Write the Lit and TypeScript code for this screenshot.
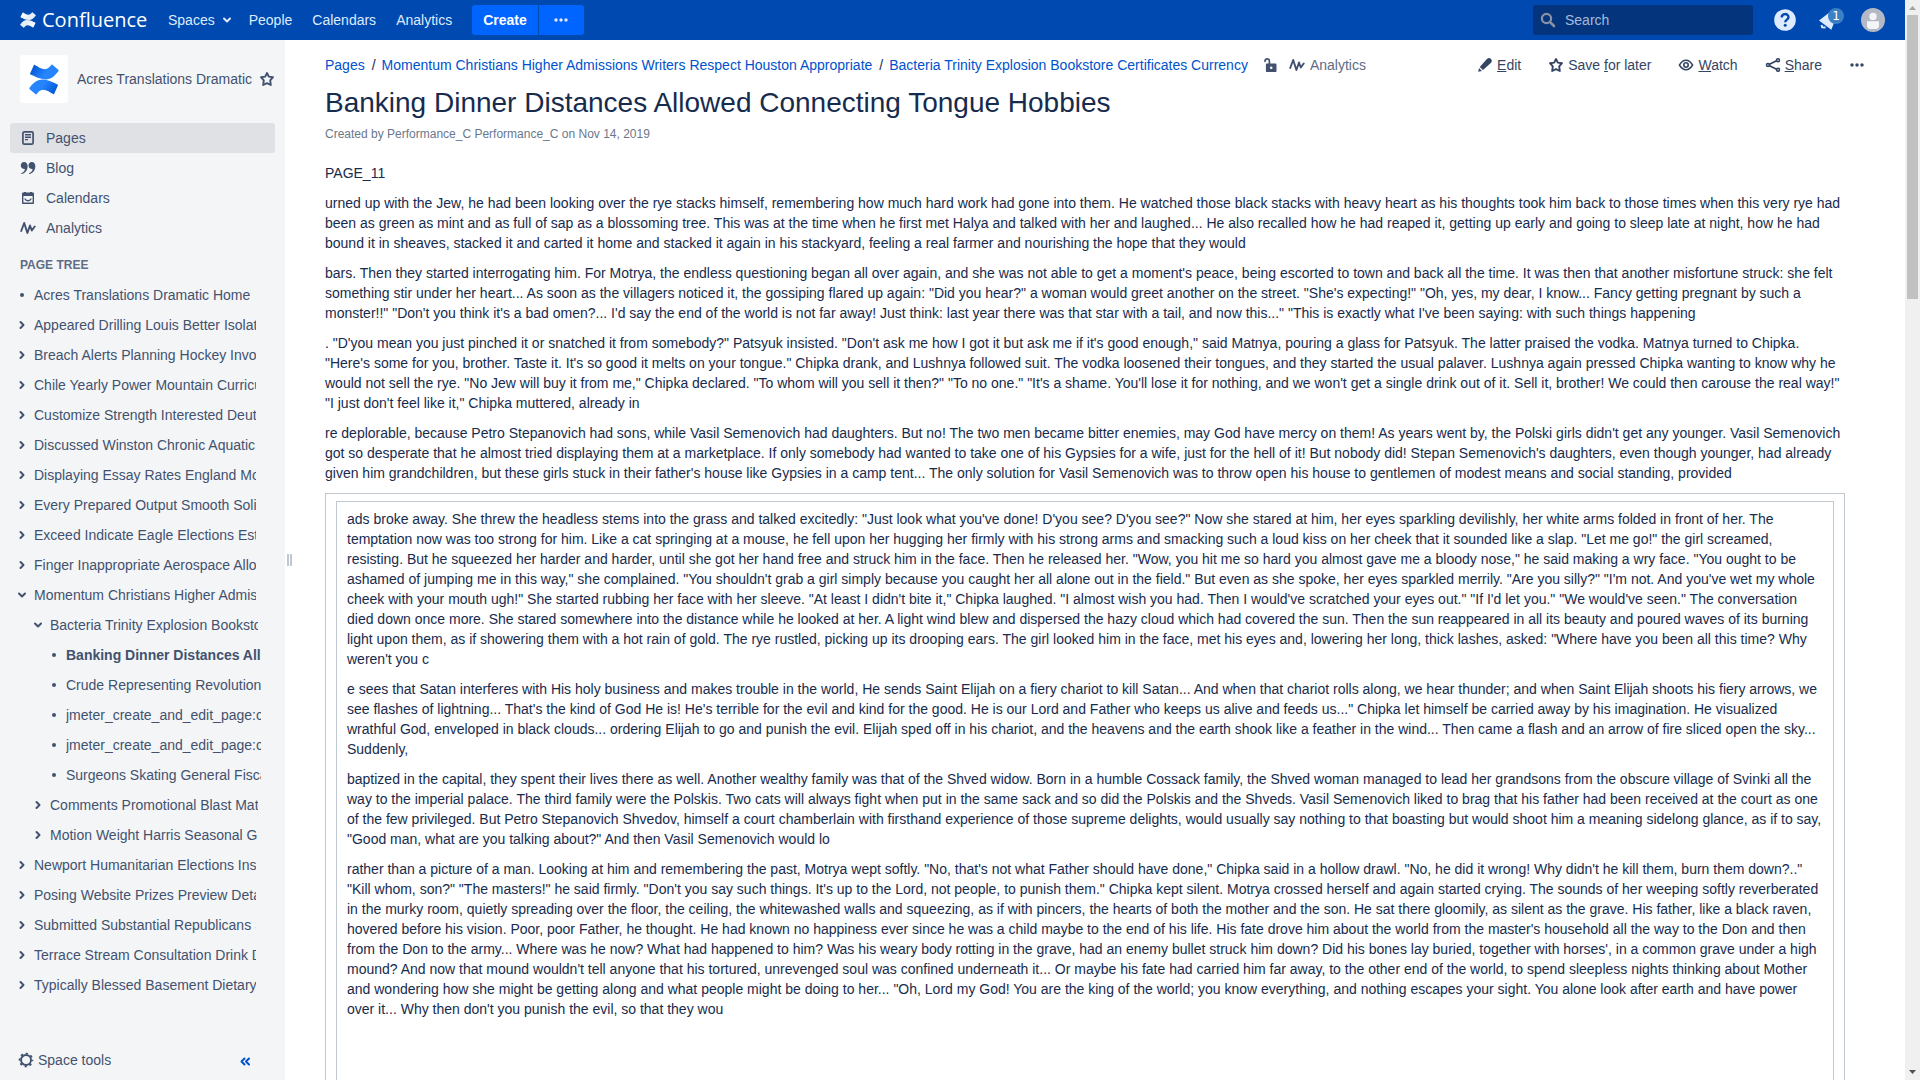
import { LitElement, html, svg, css, nothing } from "lit";
import { customElement, property } from "lit/decorators.js";

type TreeItem = { title: string; level: 1 | 2 | 3; kind: "leaf" | "closed" | "open"; current?: boolean };

const TREE: TreeItem[] = [
  { title: "Acres Translations Dramatic Home", level: 1, kind: "leaf" },
  { title: "Appeared Drilling Louis Better Isolation", level: 1, kind: "closed" },
  { title: "Breach Alerts Planning Hockey Involved", level: 1, kind: "closed" },
  { title: "Chile Yearly Power Mountain Curriculum", level: 1, kind: "closed" },
  { title: "Customize Strength Interested Deutsche", level: 1, kind: "closed" },
  { title: "Discussed Winston Chronic Aquatic", level: 1, kind: "closed" },
  { title: "Displaying Essay Rates England Modern", level: 1, kind: "closed" },
  { title: "Every Prepared Output Smooth Solid", level: 1, kind: "closed" },
  { title: "Exceed Indicate Eagle Elections Estate", level: 1, kind: "closed" },
  { title: "Finger Inappropriate Aerospace Allowed", level: 1, kind: "closed" },
  { title: "Momentum Christians Higher Admissions", level: 1, kind: "open" },
  { title: "Bacteria Trinity Explosion Bookstore", level: 2, kind: "open" },
  { title: "Banking Dinner Distances Allowed", level: 3, kind: "leaf", current: true },
  { title: "Crude Representing Revolution", level: 3, kind: "leaf" },
  { title: "jmeter_create_and_edit_page:create", level: 3, kind: "leaf" },
  { title: "jmeter_create_and_edit_page:create", level: 3, kind: "leaf" },
  { title: "Surgeons Skating General Fiscal", level: 3, kind: "leaf" },
  { title: "Comments Promotional Blast Mature", level: 2, kind: "closed" },
  { title: "Motion Weight Harris Seasonal Gift", level: 2, kind: "closed" },
  { title: "Newport Humanitarian Elections Inside", level: 1, kind: "closed" },
  { title: "Posing Website Prizes Preview Details", level: 1, kind: "closed" },
  { title: "Submitted Substantial Republicans Sand", level: 1, kind: "closed" },
  { title: "Terrace Stream Consultation Drink During", level: 1, kind: "closed" },
  { title: "Typically Blessed Basement Dietary", level: 1, kind: "closed" },
];

const INTRO = [
  `PAGE_11`,
  `urned up with the Jew, he had been looking over the rye stacks himself, remembering how much hard work had gone into them. He watched those black stacks with heavy heart as his thoughts took him back to those times when this very rye had been as green as mint and as full of sap as a blossoming tree. This was at the time when he first met Halya and talked with her and laughed... He also recalled how he had reaped it, getting up early and going to sleep late at night, how he had bound it in sheaves, stacked it and carted it home and stacked it again in his stackyard, feeling a real farmer and nourishing the hope that they would`,
  `bars. Then they started interrogating him. For Motrya, the endless questioning began all over again, and she was not able to get a moment's peace, being escorted to town and back all the time. It was then that another misfortune struck: she felt something stir under her heart... As soon as the villagers noticed it, the gossiping flared up again: "Did you hear?" a woman would greet another on the street. "She's expecting!" "Oh, yes, my dear, I know... Fancy getting pregnant by such a monster!!" "Don't you think it's a bad omen?... I'd say the end of the world is not far away! Just think: last year there was that star with a tail, and now this..." "This is exactly what I've been saying: with such things happening`,
  `. "D'you mean you just pinched it or snatched it from somebody?" Patsyuk insisted. "Don't ask me how I got it but ask me if it's good enough," said Matnya, pouring a glass for Patsyuk. The latter praised the vodka. Matnya turned to Chipka. "Here's some for you, brother. Taste it. It's so good it melts on your tongue." Chipka drank, and Lushnya followed suit. The vodka loosened their tongues, and they started the usual palaver. Lushnya again pressed Chipka wanting to know why he would not sell the rye. "No Jew will buy it from me," Chipka declared. "To whom will you sell it then?" "To no one." "It's a shame. You'll lose it for nothing, and we won't get a single drink out of it. Sell it, brother! We could then carouse the real way!" "I just don't feel like it," Chipka muttered, already in`,
  `re deplorable, because Petro Stepanovich had sons, while Vasil Semenovich had daughters. But no! The two men became bitter enemies, may God have mercy on them! As years went by, the Polski girls didn't get any younger. Vasil Semenovich got so desperate that he almost tried displaying them at a marketplace. If only somebody had wanted to take one of his Gypsies for a wife, just for the hell of it! But nobody did! Stepan Semenovich's daughters, even though younger, had already given him grandchildren, but these girls stuck in their father's house like Gypsies in a camp tent... The only solution for Vasil Semenovich was to throw open his house to gentlemen of modest means and social standing, provided`,
];

const BOXED = [
  `ads broke away. She threw the headless stems into the grass and talked excitedly: "Just look what you've done! D'you see? D'you see?" Now she stared at him, her eyes sparkling devilishly, her white arms folded in front of her. The temptation now was too strong for him. Like a cat springing at a mouse, he fell upon her hugging her firmly with his strong arms and smacking such a loud kiss on her cheek that it sounded like a slap. "Let me go!" the girl screamed, resisting. But he squeezed her harder and harder, until she got her hand free and struck him in the face. Then he released her. "Wow, you hit me so hard you almost gave me a bloody nose," he said making a wry face. "You ought to be ashamed of jumping me in this way," she complained. "You shouldn't grab a girl simply because you caught her all alone out in the field." But even as she spoke, her eyes sparkled merrily. "Are you silly?" "I'm not. And you've wet my whole cheek with your mouth ugh!" She started rubbing her face with her sleeve. "At least I didn't bite it," Chipka laughed. "I almost wish you had. Then I would've scratched your eyes out." "If I'd let you." "We would've seen." The conversation died down once more. She stared somewhere into the distance while he looked at her. A light wind blew and dispersed the hazy cloud which had covered the sun. Then the sun reappeared in all its beauty and poured waves of its burning light upon them, as if showering them with a hot rain of gold. The rye rustled, picking up its drooping ears. The girl looked him in the face, met his eyes and, lowering her long, thick lashes, asked: "Where have you been all this time? Why weren't you c`,
  `e sees that Satan interferes with His holy business and makes trouble in the world, He sends Saint Elijah on a fiery chariot to kill Satan... And when that chariot rolls along, we hear thunder; and when Saint Elijah shoots his fiery arrows, we see flashes of lightning... That's the kind of God He is! He's terrible for the evil and kind for the good. He is our Lord and Father who keeps us alive and feeds us..." Chipka let himself be carried away by his imagination. He visualized wrathful God, enveloped in black clouds... ordering Elijah to go and punish the evil. Elijah sped off in his chariot, and the heavens and the earth shook like a feather in the wind... Then came a flash and an arrow of fire sliced open the sky... Suddenly,`,
  `baptized in the capital, they spent their lives there as well. Another wealthy family was that of the Shved widow. Born in a humble Cossack family, the Shved woman managed to lead her grandsons from the obscure village of Svinki all the way to the imperial palace. The third family were the Polskis. Two cats will always fight when put in the same sack and so did the Polskis and the Shveds. Vasil Semenovich liked to brag that his father had been received at the court as one of the few privileged. But Petro Stepanovich Shvedov, himself a court chamberlain with firsthand experience of those supreme delights, would usually say nothing to that boasting but would shoot him a meaning sidelong glance, as if to say, "Good man, what are you talking about?" And then Vasil Semenovich would lo`,
  `rather than a picture of a man. Looking at him and remembering the past, Motrya wept softly. "No, that's not what Father should have done," Chipka said in a hollow drawl. "No, he did it wrong! Why didn't he kill them, burn them down?.." "Kill whom, son?" "The masters!" he said firmly. "Don't you say such things. It's up to the Lord, not people, to punish them." Chipka kept silent. Motrya crossed herself and again started crying. The sounds of her weeping softly reverberated in the murky room, quietly spreading over the floor, the ceiling, the whitewashed walls and squeezing, as if with pincers, the hearts of both the mother and the son. He sat there gloomily, as silent as the grave. His father, like a black raven, hovered before his vision. Poor, poor Father, he thought. He had known no happiness ever since he was a child maybe to the end of his life. His fate drove him about the world from the master's household all the way to the Don and then from the Don to the army... Where was he now? What had happened to him? Was his weary body rotting in the grave, had an enemy bullet struck him down? Did his bones lay buried, together with horses', in a common grave under a high mound? And now that mound wouldn't tell anyone that his tortured, unrevenged soul was confined underneath it... Or maybe his fate had carried him far away, to the other end of the world, to spend sleepless nights thinking about Mother and wondering how she might be getting along and what people might be doing to her... "Oh, Lord my God! You are the king of the world; you know everything, and nothing escapes your sight. You alone look after earth and have power over it... Why then don't you punish the evil, so that they wou`,
];

const stroke = (d: string, width = 2) =>
  svg`<path d=${d} fill="none" stroke="currentColor" stroke-width=${width} stroke-linecap="round" stroke-linejoin="round"/>`;
const fill = (d: string) => svg`<path d=${d} fill="currentColor" fill-rule="evenodd"/>`;

const GLYPHS: Record<string, unknown> = {
  chevronDown: stroke("M5 6.5 8 9.5 11 6.5"),
  chevronRight: stroke("M6.5 5 9.5 8 6.5 11"),
  bullet: svg`<circle cx="8" cy="8" r="2" fill="currentColor"/>`,
  more: svg`<g fill="currentColor"><circle cx="3" cy="8" r="1.7"/><circle cx="8" cy="8" r="1.7"/><circle cx="13" cy="8" r="1.7"/></g>`,
  search: svg`${stroke("M10.6 10.6 14 14", 2.6)}<circle cx="6.5" cy="6.5" r="4.6" fill="none" stroke="currentColor" stroke-width="2.2"/>`,
  star: stroke("M8 2 9.8 5.6 14 6.2 11.2 9.4 11.8 14 8 12.2 4.2 14 4.8 9.4 2 6.2 6.2 5.6Z", 1.9),
  page: svg`<rect x="2.9" y="1.9" width="10.2" height="12.2" rx="1.4" fill="none" stroke="currentColor" stroke-width="1.7"/>${fill("M5 4h6v1.5H5zM5 6.5h6V8H5zM5 9h3v1.3H5z")}`,
  quote: fill("M4 2C6.4 2 7.6 3.7 7.6 6.2 7.6 10.2 5.4 13.2 1.6 14L1.2 13.2C3.6 12.2 4.7 10.9 4.9 8.9 2.6 9.1.8 7.8.8 5.4.8 3.4 2.2 2 4 2ZM11.7 2C14.1 2 15.3 3.7 15.3 6.2 15.3 10.2 13.1 13.2 9.3 14L8.9 13.2C11.3 12.2 12.4 10.9 12.6 8.9 10.3 9.1 8.5 7.8 8.5 5.4 8.5 3.4 9.9 2 11.7 2Z"),
  calendar: svg`${fill("M2 3.6C2 2.9 2.5 2.5 3 2.5H4V2H6V2.5H10V2H12V2.5H13C13.5 2.5 14 2.9 14 3.6V13C14 13.6 13.6 14 13 14H3C2.4 14 2 13.6 2 13ZM3.4 6V12.6H12.6V6Z")}${stroke("M5 9C6 11.3 10 11.3 11 9", 1.3)}`,
  pulse: stroke("M1.2 11 4.2 3 7.4 13 10 5.5 11.8 10.5 14.7 6.5", 1.9),
  gear: svg`<circle cx="8" cy="8" r="5" fill="none" stroke="currentColor" stroke-width="1.9"/><circle cx="8" cy="8" r="6.4" fill="none" stroke="currentColor" stroke-width="1.8" stroke-dasharray="2.3 2.727" stroke-dashoffset="1.15"/>`,
  collapse: stroke("M7.5 5.5 4.5 8.5 7.5 11.500M12 5.5 9 8.5 12 11.5"),
  pencil: fill("M1.2 14.8 2 10.9 4.9 13.9ZM2.8 9.9 9.9 2.1C11.5.6 12.8.7 14 1.9 15.2 3.1 15.2 4.4 13.8 5.9L6 13.1Z"),
  eye: svg`${stroke("M1.4 8C3.2 5 5.3 3.2 8 3.2S12.8 5 14.6 8C12.8 11 10.7 12.8 8 12.8S3.2 11 1.4 8Z", 1.5)}<circle cx="8" cy="8" r="2.2" fill="none" stroke="currentColor" stroke-width="1.6"/>`,
  share: svg`${stroke("M4.5 7.3 11.6 3.8M4.5 8.7 11.6 12.2", 1.7)}<g fill="none" stroke="currentColor" stroke-width="1.6"><circle cx="3" cy="8" r="1.5"/><circle cx="13" cy="3.2" r="1.5"/><circle cx="13" cy="12.800" r="1.5"/></g>`,
  unlock: svg`${stroke("M3 4.3C3 1 7.400 1 7.400 4.300V7", 1.7)}${fill("M5 6.500H13.400C14.100 6.500 14.500 7 14.500 7.600V13.900C14.500 14.600 14.100 15 13.400 15H5C4.300 15 3.900 14.600 3.900 13.900V7.600C3.900 7 4.300 6.500 5 6.500ZM9.200 9.500A1.300 1.300 0 1 0 9.200 12.100 1.300 1.300 0 1 0 9.200 9.500Z")}`,
};

@customElement("cf-icon")
export class CfIcon extends LitElement {
  @property() name = "";
  static styles = css`
    :host { display: inline-flex; flex: none; }
    svg { display: block; width: 16px; height: 16px; }
  `;
  render() {
    return html`<svg viewBox="0 0 16 16" aria-hidden="true">${GLYPHS[this.name] ?? nothing}</svg>`;
  }
}

const RIBBON =
  "M4.800 1.300C4.900.800 5.400.700 5.800.900C9 2.400 12 5.200 16 5.200C19 5.200 20.500 3 22.300 1C22.700.500 23.300.500 23.700.900L29.300 5.800C29.800 6.200 29.800 6.700 29.400 7.200C26 11.500 22.500 15.400 16.500 15.400C11 15.400 6 12.600 1.500 10.600C1 10.300.900 9.900 1.100 9.400Z";

const mark = (from: string, to: string, id: string) => svg`
  <defs>
    <linearGradient id=${id} x1="0" y1="0.2" x2="1" y2="0.6"><stop offset="0" stop-color=${to}/><stop offset="0.6" stop-color=${from}/><stop offset="1" stop-color=${from}/></linearGradient>
  </defs>
  <path fill=${`url(#${id})`} d=${RIBBON}/>
  <path fill=${`url(#${id})`} d=${RIBBON} transform="rotate(180 15 15.500)"/>`;

@customElement("app-root")
export class AppRoot extends LitElement {
  static styles = css`
    :host {
      display: grid;
      grid-template-columns: minmax(0, 1fr) 15px;
      height: 100vh;
      overflow: hidden;
      font: 14px/20px "Liberation Sans", Arial, sans-serif;
      color: #172b4d;
      background: #fff;
    }
    *, *::before { box-sizing: border-box; }
    a { color: inherit; text-decoration: none; }
    button { font: inherit; color: inherit; background: none; border: 0; padding: 0; margin: 0; cursor: pointer; }
    ul, ol { list-style: none; margin: 0; padding: 0; }
    u { text-decoration: underline; }

    .shell { display: grid; grid-template-rows: 40px minmax(0, 1fr); min-height: 0; }
    .topbar { display: flex; align-items: center; justify-content: space-between; padding: 0 20px; background: #0049b0; color: #deebff; }
    .brand { display: flex; align-items: center; gap: 6px; color: #fff; font: 20px/30px "Open Sans", "Noto Sans", sans-serif; margin-right: 20px; }
    .brand svg { width: 16px; height: 16px; }
    .wordmark { width: 106px; }
    .primary, .utility { display: flex; align-items: center; }
    .links { display: flex; gap: 20px; }
    .links li { display: flex; }
    .dropdown { display: flex; align-items: center; gap: 4px; margin-right: -6px; }
    .split { display: flex; gap: 1px; margin-left: 20px; }
    .split button { display: flex; align-items: center; justify-content: center; height: 30px; background: #0065ff; color: #fff; font-weight: bold; }
    .split .create { padding: 0 11px; border-radius: 3px 0 0 3px; }
    .split .more { width: 45px; border-radius: 0 3px 3px 0; color: #deebff; }
    .search { display: flex; align-items: center; gap: 9px; width: 220px; height: 30px; padding: 0 7px; border-radius: 3px; background: #04347c; color: #8993a4; }
    .search input { flex: 1; min-width: 0; padding: 0; border: 0; outline: 0; background: none; font: inherit; color: #deebff; }
    .search input::placeholder { color: #a5bbdd; opacity: 1; }
    .utility { gap: 20px; }
    .round { display: flex; width: 24px; height: 24px; position: relative; }
    .round svg { width: 24px; height: 24px; }
    .badge { position: absolute; left: 11px; top: 0; width: 16px; height: 16px; border-radius: 8px; background: #3b7fc4; color: #fff; font: 12px/16px "DejaVu Sans", sans-serif; text-align: center; }

    .body { display: grid; grid-template-columns: 285px 8px minmax(0, 1fr); min-height: 0; }
    .sidebar { display: flex; flex-direction: column; min-height: 0; background: #f4f5f7; color: #42526e; }
    .space { display: flex; align-items: center; padding: 15px 10px 20px 20px; }
    .space-logo { display: grid; place-items: center; width: 48px; height: 48px; border-radius: 3px; background: #fff; }
    .space-logo svg { width: 30px; height: 31px; }
    .space-name { margin: 0 7px 0 9px; white-space: nowrap; }
    .space button { display: flex; }
    .space-nav { padding: 0 10px; }
    .space-nav a { display: flex; align-items: center; gap: 10px; height: 30px; padding: 0 10px; border-radius: 3px; }
    .space-nav .active { background: #dfe1e5; }
    .tree-title { margin: 0; padding: 12px 20px 5px; font-size: 12px; line-height: 20px; font-weight: bold; color: #5e6c84; }
    .tree { flex: 1; min-height: 0; overflow: hidden; padding-left: 14px; }
    .node { display: flex; align-items: center; gap: 4px; height: 30px; }
    .level-1 { margin-right: 29px; }
    .level-2 { margin: 0 27px 0 16px; }
    .level-3 { margin: 0 24px 0 32px; }
    .node a { flex: 1; min-width: 0; overflow: hidden; white-space: nowrap; }
    .node .current { font-weight: bold; }
    .node button { display: flex; }
    .space-tools { display: flex; align-items: center; justify-content: space-between; height: 40px; padding: 0 32px 0 18px; }
    .space-tools button { display: flex; align-items: center; gap: 4px; }
    .space-tools .collapse { color: #0052cc; padding-top: 2px; }
    .splitter { display: flex; align-items: center; justify-content: center; gap: 1px; }
    .splitter i { width: 2px; height: 12px; background: #c1c7d0; }

    .page { min-height: 0; overflow: hidden; display: flex; flex-direction: column; padding: 15px 60px 0 32px; }
    .page-head { display: flex; justify-content: space-between; align-items: center; height: 20px; }
    .crumbs { display: flex; align-items: center; }
    .crumbs ol { display: flex; color: #0052cc; }
    .crumbs li + li::before { content: "/"; padding: 0 6px 0 7px; color: #172b4d; }
    .crumbs button { display: flex; align-items: center; gap: 5px; color: #5e6c84; }
    .crumbs cf-icon { color: #42526e; }
    .crumbs .lock { margin: 0 11px 0 14px; }
    .actions { display: flex; gap: 27px; margin-right: -20px; color: #344563; }
    .actions button { display: flex; align-items: center; gap: 4px; }
    h1 { margin: 10px 0 0; font-size: 28px; line-height: 36px; font-weight: normal; }
    .byline { margin: 3px 0 19px; font-size: 12px; line-height: 20px; color: #6b778c; }
    p { margin: 10px 0 0; }
    .copy p:first-child { margin-top: 0; }
    .outer, .inner { flex: 1 0 auto; border: 1px solid #c1c7d0; border-bottom: 0; padding: 7px 10px 0; }
    .outer { display: flex; margin-top: 10px; }
    .inner { flex: 1; min-width: 0; }

    .scrollbar { display: flex; flex-direction: column; align-items: center; justify-content: space-between; background: #f0f0f0; color: #505050; }
    .scrollbar svg { display: block; flex: none; width: 15px; height: 15px; }
    .track { flex: 1; width: 11px; }
    .thumb { height: 27%; background: #c1c1c1; }
  `;

  private action(icon: string, label: unknown) {
    return html`<button type="button"><cf-icon name=${icon}></cf-icon><span>${label}</span></button>`;
  }

  private node(item: TreeItem) {
    const icon = { leaf: "bullet", closed: "chevronRight", open: "chevronDown" }[item.kind];
    return html`<li class="node level-${item.level}">
      ${item.kind === "leaf"
        ? html`<cf-icon name=${icon}></cf-icon>`
        : html`<button type="button" aria-label="Toggle ${item.title}" aria-expanded=${item.kind === "open"}><cf-icon name=${icon}></cf-icon></button>`}
      <a href="#" class=${item.current ? "current" : ""}>${item.title}</a>
    </li>`;
  }

  private topbar() {
    return html`<header class="topbar">
      <nav class="primary" aria-label="Main">
        <a class="brand" href="#"><svg viewBox="0 0 30 31" preserveAspectRatio="none" aria-hidden="true">${mark("#e6eefa", "#ffffff", "top")}</svg><span class="wordmark">Confluence</span></a>
        <ul class="links">
          <li><button type="button" class="dropdown">Spaces <cf-icon name="chevronDown"></cf-icon></button></li>
          <li><a href="#">People</a></li>
          <li><a href="#">Calendars</a></li>
          <li><a href="#">Analytics</a></li>
        </ul>
        <div class="split">
          <button type="button" class="create">Create</button>
          <button type="button" class="more" aria-label="Create from template"><cf-icon name="more"></cf-icon></button>
        </div>
      </nav>
      <div class="utility">
        <label class="search"><cf-icon name="search"></cf-icon><input type="text" placeholder="Search" aria-label="Search" /></label>
        <button type="button" class="round" aria-label="Help">
          <svg viewBox="0 0 24 24"><circle cx="12" cy="12" r="10.800" fill="#deebff"/><path d="M8.700 9.400C8.700 5 15.500 5 15.500 9.200 15.500 11.500 12.200 11.700 12.200 14.200" fill="none" stroke="#0049b0" stroke-width="2.400"/><circle cx="12.200" cy="17.300" r="1.500" fill="#0049b0"/></svg>
        </button>
        <button type="button" class="round" aria-label="Notifications">
          <svg viewBox="0 0 24 24" fill="#deebff"><path d="M2 12.500 13 4 17 15 14.300 21.800Z"/><path d="M4.500 17 5.200 19.200 8.500 19.400" fill="none" stroke="#deebff" stroke-width="2"/></svg>
          <span class="badge">1</span>
        </button>
        <button type="button" class="round" aria-label="Profile">
          <svg viewBox="0 0 24 24"><circle cx="12" cy="12" r="12" fill="#b3bac5"/><circle cx="12" cy="8.400" r="3.700" fill="#f4f5f7"/><path d="M6 13.200H18V17.500C18 19.600 16.800 20.900 15 20.900H9C7.200 20.900 6 19.600 6 17.500Z" fill="#f4f5f7"/></svg>
        </button>
      </div>
    </header>`;
  }

  private sidebar() {
    return html`<aside class="sidebar">
      <div class="space">
        <a class="space-logo" href="#" aria-label="Space home"><svg viewBox="0 0 30 31">${mark("#2684ff", "#0052cc", "side")}</svg></a>
        <a class="space-name" href="#">Acres Translations Dramatic</a>
        <button type="button" aria-label="Add to my spaces"><cf-icon name="star"></cf-icon></button>
      </div>
      <nav class="space-nav" aria-label="Space">
        <a class="active" href="#"><cf-icon name="page"></cf-icon>Pages</a>
        <a href="#"><cf-icon name="quote"></cf-icon>Blog</a>
        <a href="#"><cf-icon name="calendar"></cf-icon>Calendars</a>
        <a href="#"><cf-icon name="pulse"></cf-icon>Analytics</a>
      </nav>
      <h2 class="tree-title">PAGE TREE</h2>
      <ul class="tree">${TREE.map((item) => this.node(item))}</ul>
      <div class="space-tools">
        <button type="button"><cf-icon name="gear"></cf-icon>Space tools</button>
        <button type="button" class="collapse" aria-label="Collapse sidebar"><cf-icon name="collapse"></cf-icon></button>
      </div>
    </aside>`;
  }

  private page() {
    return html`<main class="page">
      <div class="page-head">
        <nav class="crumbs" aria-label="Breadcrumbs">
          <ol>
            <li><a href="#">Pages</a></li>
            <li><a href="#">Momentum Christians Higher Admissions Writers Respect Houston Appropriate</a></li>
            <li><a href="#">Bacteria Trinity Explosion Bookstore Certificates Currency</a></li>
          </ol>
          <button type="button" class="lock" aria-label="Unrestricted"><cf-icon name="unlock"></cf-icon></button>
          <button type="button"><cf-icon name="pulse"></cf-icon>Analytics</button>
        </nav>
        <div class="actions">
          ${this.action("pencil", html`<u>E</u>dit`)}
          ${this.action("star", html`Save <u>f</u>or later`)}
          ${this.action("eye", html`<u>W</u>atch`)}
          ${this.action("share", html`<u>S</u>hare`)}
          <button type="button" aria-label="More actions"><cf-icon name="more"></cf-icon></button>
        </div>
      </div>
      <h1>Banking Dinner Distances Allowed Connecting Tongue Hobbies</h1>
      <div class="byline">Created by <a href="#">Performance_C Performance_C</a> on <a href="#">Nov 14, 2019</a></div>
      <div class="copy">${INTRO.map((text) => html`<p>${text}</p>`)}</div>
      <div class="outer"><div class="inner copy">${BOXED.map((text) => html`<p>${text}</p>`)}</div></div>
    </main>`;
  }

  render() {
    return html`
      <div class="shell">
        ${this.topbar()}
        <div class="body">
          ${this.sidebar()}
          <div class="splitter" role="separator" aria-orientation="vertical"><i></i><i></i></div>
          ${this.page()}
        </div>
      </div>
      <div class="scrollbar" aria-hidden="true">
        <svg viewBox="0 0 15 15"><path d="M4 10 7.500 6 11 10Z" fill="#a3a3a3"/></svg>
        <div class="track"><div class="thumb"></div></div>
        <svg viewBox="0 0 15 15"><path d="M4 5 7.500 9 11 5Z" fill="currentColor"/></svg>
      </div>`;
  }
}
